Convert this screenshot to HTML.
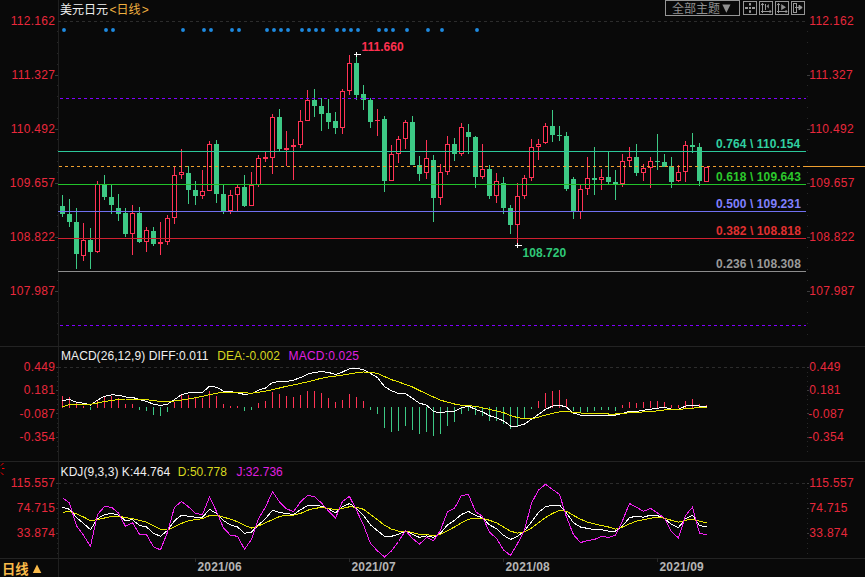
<!DOCTYPE html>
<html lang="zh"><head><meta charset="utf-8"><title>美元日元 日线</title>
<style>html,body{margin:0;padding:0;background:#090909;overflow:hidden}svg{display:block}text{font-family:"Liberation Sans","Noto Sans CJK SC",sans-serif;font-size:12px}.b{font-weight:bold}.c{shape-rendering:crispEdges}</style></head><body>
<svg width="865" height="577" viewBox="0 0 865 577">
<rect width="865" height="577" fill="#090909"/>
<g class="c" stroke="#1f1f1f" stroke-width="1" fill="none">
<path d="M58.5 0V577"/>
<path d="M0 346.5H865M0 461.5H865M0 558.5H865" stroke="#232323"/>
</g>
<path class="c" d="M57 31.5h1M807 31.5h1M57 42.5h1M807 42.5h1M57 53.5h1M807 53.5h1M57 64.5h1M807 64.5h1M57 85.5h1M807 85.5h1M57 96.5h1M807 96.5h1M57 107.5h1M807 107.5h1M57 118.5h1M807 118.5h1M57 139.5h1M807 139.5h1M57 150.5h1M807 150.5h1M57 161.5h1M807 161.5h1M57 172.5h1M807 172.5h1M57 193.5h1M807 193.5h1M57 204.5h1M807 204.5h1M57 215.5h1M807 215.5h1M57 226.5h1M807 226.5h1M57 247.5h1M807 247.5h1M57 258.5h1M807 258.5h1M57 269.5h1M807 269.5h1M57 280.5h1M807 280.5h1M57 301.5h1M807 301.5h1M57 312.5h1M807 312.5h1M57 323.5h1M807 323.5h1M57 334.5h1M807 334.5h1M57 372.5h1M807 372.5h1M57 376.5h1M807 376.5h1M57 381.5h1M807 381.5h1M57 386.5h1M807 386.5h1M57 395.5h1M807 395.5h1M57 399.5h1M807 399.5h1M57 404.5h1M807 404.5h1M57 409.5h1M807 409.5h1M57 418.5h1M807 418.5h1M57 423.5h1M807 423.5h1M57 427.5h1M807 427.5h1M57 432.5h1M807 432.5h1M57 441.5h1M807 441.5h1M57 446.5h1M807 446.5h1M57 451.5h1M807 451.5h1M57 488.5h1M807 488.5h1M57 493.5h1M807 493.5h1M57 498.5h1M807 498.5h1M57 503.5h1M807 503.5h1M57 513.5h1M807 513.5h1M57 518.5h1M807 518.5h1M57 523.5h1M807 523.5h1M57 528.5h1M807 528.5h1M57 538.5h1M807 538.5h1M57 543.5h1M807 543.5h1M57 548.5h1M807 548.5h1M57 553.5h1M807 553.5h1" stroke="#272727" stroke-width="1"/>
<path class="c" d="M55 75.5h3M807 75.5h3M55 129.5h3M807 129.5h3M55 183.5h3M807 183.5h3M55 237.5h3M807 237.5h3M55 291.5h3M807 291.5h3M56 367.5h2M807 367.5h2M56 390.5h2M807 390.5h2M56 413.5h2M807 413.5h2M56 437.5h2M807 437.5h2M56 483.5h2M807 483.5h2M56 508.5h2M807 508.5h2M56 533.5h2M807 533.5h2" stroke="#3c3c3c" stroke-width="1"/>
<path class="c" d="M195.5 558v4M349.5 558v4M503.5 558v4M657.5 558v4" stroke="#2a2a2a" stroke-width="1"/>
<g class="c" stroke="#2c2c2c" stroke-width="1" stroke-dasharray="3 3">
<path d="M58 21.5H805"/><path d="M58 367.5H805"/><path d="M58 483.5H805"/>
</g>
<g fill="#1e8ae0">
<circle cx="64" cy="30" r="1.95"/>
<circle cx="106" cy="30" r="1.95"/>
<circle cx="113" cy="30" r="1.95"/>
<circle cx="183" cy="30" r="1.95"/>
<circle cx="204" cy="30" r="1.95"/>
<circle cx="211" cy="30" r="1.95"/>
<circle cx="232" cy="30" r="1.95"/>
<circle cx="239" cy="30" r="1.95"/>
<circle cx="267" cy="30" r="1.95"/>
<circle cx="274" cy="30" r="1.95"/>
<circle cx="281" cy="30" r="1.95"/>
<circle cx="288" cy="30" r="1.95"/>
<circle cx="302" cy="30" r="1.95"/>
<circle cx="309" cy="30" r="1.95"/>
<circle cx="316" cy="30" r="1.95"/>
<circle cx="323" cy="30" r="1.95"/>
<circle cx="337" cy="30" r="1.95"/>
<circle cx="344" cy="30" r="1.95"/>
<circle cx="351" cy="30" r="1.95"/>
<circle cx="358" cy="30" r="1.95"/>
<circle cx="379" cy="30" r="1.95"/>
<circle cx="386" cy="30" r="1.95"/>
<circle cx="393" cy="30" r="1.95"/>
<circle cx="407" cy="30" r="1.95"/>
<circle cx="428" cy="30" r="1.95"/>
<circle cx="442" cy="30" r="1.95"/>
<circle cx="477" cy="30" r="1.95"/>
</g>
<g class="c">
<rect x="62" y="195" width="1" height="22" fill="#3dc985"/>
<rect x="60" y="206" width="5" height="8" fill="#3dc985"/>
<rect x="69" y="199" width="1" height="28" fill="#3dc985"/>
<rect x="67" y="214" width="5" height="8" fill="#3dc985"/>
<rect x="76" y="208" width="1" height="61" fill="#3dc985"/>
<rect x="74" y="222" width="5" height="32" fill="#3dc985"/>
<rect x="83" y="223" width="1" height="38" fill="#ff3355"/>
<rect x="81" y="240" width="5" height="16" fill="#ff3355"/>
<rect x="82" y="241" width="3" height="14" fill="#000"/>
<rect x="90" y="228" width="1" height="41" fill="#3dc985"/>
<rect x="88" y="240" width="5" height="12" fill="#3dc985"/>
<rect x="97" y="181" width="1" height="72" fill="#ff3355"/>
<rect x="95" y="184" width="5" height="68" fill="#ff3355"/>
<rect x="96" y="185" width="3" height="66" fill="#000"/>
<rect x="104" y="175" width="1" height="25" fill="#3dc985"/>
<rect x="102" y="184" width="5" height="13" fill="#3dc985"/>
<rect x="111" y="184" width="1" height="30" fill="#3dc985"/>
<rect x="109" y="197" width="5" height="8" fill="#3dc985"/>
<rect x="118" y="194" width="1" height="27" fill="#3dc985"/>
<rect x="116" y="208" width="5" height="6" fill="#3dc985"/>
<rect x="125" y="208" width="1" height="29" fill="#3dc985"/>
<rect x="123" y="213" width="5" height="21" fill="#3dc985"/>
<rect x="132" y="205" width="1" height="50" fill="#ff3355"/>
<rect x="130" y="213" width="5" height="21" fill="#ff3355"/>
<rect x="131" y="214" width="3" height="19" fill="#000"/>
<rect x="139" y="207" width="1" height="36" fill="#3dc985"/>
<rect x="137" y="213" width="5" height="29" fill="#3dc985"/>
<rect x="146" y="227" width="1" height="25" fill="#ff3355"/>
<rect x="144" y="230" width="5" height="12" fill="#ff3355"/>
<rect x="145" y="231" width="3" height="10" fill="#000"/>
<rect x="153" y="227" width="1" height="19" fill="#3dc985"/>
<rect x="151" y="231" width="5" height="13" fill="#3dc985"/>
<rect x="160" y="222" width="1" height="33" fill="#ff3355"/>
<rect x="158" y="242" width="5" height="2" fill="#ff3355"/>
<rect x="167" y="215" width="1" height="30" fill="#ff3355"/>
<rect x="165" y="218" width="5" height="24" fill="#ff3355"/>
<rect x="166" y="219" width="3" height="22" fill="#000"/>
<rect x="174" y="167" width="1" height="57" fill="#ff3355"/>
<rect x="172" y="175" width="5" height="43" fill="#ff3355"/>
<rect x="173" y="176" width="3" height="41" fill="#000"/>
<rect x="181" y="149" width="1" height="30" fill="#ff3355"/>
<rect x="179" y="172" width="5" height="3" fill="#ff3355"/>
<rect x="180" y="173" width="3" height="1" fill="#000"/>
<rect x="188" y="166" width="1" height="38" fill="#3dc985"/>
<rect x="186" y="173" width="5" height="17" fill="#3dc985"/>
<rect x="195" y="181" width="1" height="24" fill="#3dc985"/>
<rect x="193" y="190" width="5" height="6" fill="#3dc985"/>
<rect x="202" y="170" width="1" height="29" fill="#ff3355"/>
<rect x="200" y="191" width="5" height="5" fill="#ff3355"/>
<rect x="201" y="192" width="3" height="3" fill="#000"/>
<rect x="209" y="141" width="1" height="50" fill="#ff3355"/>
<rect x="207" y="144" width="5" height="47" fill="#ff3355"/>
<rect x="208" y="145" width="3" height="45" fill="#000"/>
<rect x="216" y="140" width="1" height="63" fill="#3dc985"/>
<rect x="214" y="144" width="5" height="50" fill="#3dc985"/>
<rect x="223" y="185" width="1" height="29" fill="#3dc985"/>
<rect x="221" y="194" width="5" height="18" fill="#3dc985"/>
<rect x="230" y="190" width="1" height="24" fill="#ff3355"/>
<rect x="228" y="195" width="5" height="16" fill="#ff3355"/>
<rect x="229" y="196" width="3" height="14" fill="#000"/>
<rect x="237" y="185" width="1" height="26" fill="#ff3355"/>
<rect x="235" y="187" width="5" height="8" fill="#ff3355"/>
<rect x="236" y="188" width="3" height="6" fill="#000"/>
<rect x="244" y="175" width="1" height="32" fill="#3dc985"/>
<rect x="242" y="187" width="5" height="19" fill="#3dc985"/>
<rect x="251" y="172" width="1" height="34" fill="#ff3355"/>
<rect x="249" y="185" width="5" height="21" fill="#ff3355"/>
<rect x="250" y="186" width="3" height="19" fill="#000"/>
<rect x="258" y="155" width="1" height="32" fill="#ff3355"/>
<rect x="256" y="158" width="5" height="27" fill="#ff3355"/>
<rect x="257" y="159" width="3" height="25" fill="#000"/>
<rect x="265" y="152" width="1" height="10" fill="#ff3355"/>
<rect x="263" y="157" width="5" height="2" fill="#ff3355"/>
<rect x="272" y="114" width="1" height="60" fill="#ff3355"/>
<rect x="270" y="117" width="5" height="41" fill="#ff3355"/>
<rect x="271" y="118" width="3" height="39" fill="#000"/>
<rect x="279" y="109" width="1" height="42" fill="#3dc985"/>
<rect x="277" y="117" width="5" height="32" fill="#3dc985"/>
<rect x="286" y="131" width="1" height="35" fill="#ff3355"/>
<rect x="284" y="148" width="5" height="2" fill="#ff3355"/>
<rect x="293" y="139" width="1" height="41" fill="#ff3355"/>
<rect x="291" y="145" width="5" height="2" fill="#ff3355"/>
<rect x="300" y="110" width="1" height="38" fill="#ff3355"/>
<rect x="298" y="121" width="5" height="24" fill="#ff3355"/>
<rect x="299" y="122" width="3" height="22" fill="#000"/>
<rect x="307" y="90" width="1" height="31" fill="#ff3355"/>
<rect x="305" y="100" width="5" height="21" fill="#ff3355"/>
<rect x="306" y="101" width="3" height="19" fill="#000"/>
<rect x="314" y="89" width="1" height="28" fill="#3dc985"/>
<rect x="312" y="100" width="5" height="6" fill="#3dc985"/>
<rect x="321" y="98" width="1" height="33" fill="#3dc985"/>
<rect x="319" y="106" width="5" height="8" fill="#3dc985"/>
<rect x="328" y="99" width="1" height="30" fill="#3dc985"/>
<rect x="326" y="113" width="5" height="9" fill="#3dc985"/>
<rect x="335" y="112" width="1" height="22" fill="#3dc985"/>
<rect x="333" y="121" width="5" height="7" fill="#3dc985"/>
<rect x="342" y="89" width="1" height="45" fill="#ff3355"/>
<rect x="340" y="91" width="5" height="37" fill="#ff3355"/>
<rect x="341" y="92" width="3" height="35" fill="#000"/>
<rect x="349" y="55" width="1" height="40" fill="#ff3355"/>
<rect x="347" y="63" width="5" height="28" fill="#ff3355"/>
<rect x="348" y="64" width="3" height="26" fill="#000"/>
<rect x="356" y="54" width="1" height="46" fill="#3dc985"/>
<rect x="354" y="63" width="5" height="32" fill="#3dc985"/>
<rect x="363" y="85" width="1" height="25" fill="#3dc985"/>
<rect x="361" y="94" width="5" height="6" fill="#3dc985"/>
<rect x="370" y="98" width="1" height="30" fill="#3dc985"/>
<rect x="368" y="100" width="5" height="22" fill="#3dc985"/>
<rect x="377" y="109" width="1" height="27" fill="#ff3355"/>
<rect x="375" y="120" width="5" height="1" fill="#ff3355"/>
<rect x="384" y="116" width="1" height="76" fill="#3dc985"/>
<rect x="382" y="119" width="5" height="62" fill="#3dc985"/>
<rect x="391" y="145" width="1" height="36" fill="#ff3355"/>
<rect x="389" y="154" width="5" height="27" fill="#ff3355"/>
<rect x="390" y="155" width="3" height="25" fill="#000"/>
<rect x="398" y="136" width="1" height="27" fill="#ff3355"/>
<rect x="396" y="139" width="5" height="15" fill="#ff3355"/>
<rect x="397" y="140" width="3" height="13" fill="#000"/>
<rect x="405" y="120" width="1" height="29" fill="#ff3355"/>
<rect x="403" y="122" width="5" height="17" fill="#ff3355"/>
<rect x="404" y="123" width="3" height="15" fill="#000"/>
<rect x="412" y="116" width="1" height="49" fill="#3dc985"/>
<rect x="410" y="122" width="5" height="43" fill="#3dc985"/>
<rect x="419" y="156" width="1" height="25" fill="#3dc985"/>
<rect x="417" y="165" width="5" height="9" fill="#3dc985"/>
<rect x="426" y="140" width="1" height="39" fill="#ff3355"/>
<rect x="424" y="158" width="5" height="15" fill="#ff3355"/>
<rect x="425" y="159" width="3" height="13" fill="#000"/>
<rect x="433" y="155" width="1" height="67" fill="#3dc985"/>
<rect x="431" y="160" width="5" height="38" fill="#3dc985"/>
<rect x="440" y="164" width="1" height="41" fill="#ff3355"/>
<rect x="438" y="172" width="5" height="26" fill="#ff3355"/>
<rect x="439" y="173" width="3" height="24" fill="#000"/>
<rect x="447" y="136" width="1" height="39" fill="#ff3355"/>
<rect x="445" y="144" width="5" height="28" fill="#ff3355"/>
<rect x="446" y="145" width="3" height="26" fill="#000"/>
<rect x="454" y="138" width="1" height="23" fill="#3dc985"/>
<rect x="452" y="144" width="5" height="10" fill="#3dc985"/>
<rect x="461" y="123" width="1" height="33" fill="#ff3355"/>
<rect x="459" y="127" width="5" height="27" fill="#ff3355"/>
<rect x="460" y="128" width="3" height="25" fill="#000"/>
<rect x="468" y="124" width="1" height="30" fill="#3dc985"/>
<rect x="466" y="132" width="5" height="5" fill="#3dc985"/>
<rect x="475" y="136" width="1" height="52" fill="#3dc985"/>
<rect x="473" y="137" width="5" height="40" fill="#3dc985"/>
<rect x="482" y="144" width="1" height="35" fill="#ff3355"/>
<rect x="480" y="169" width="5" height="8" fill="#ff3355"/>
<rect x="481" y="170" width="3" height="6" fill="#000"/>
<rect x="489" y="165" width="1" height="34" fill="#3dc985"/>
<rect x="487" y="169" width="5" height="27" fill="#3dc985"/>
<rect x="496" y="173" width="1" height="30" fill="#ff3355"/>
<rect x="494" y="181" width="5" height="15" fill="#ff3355"/>
<rect x="495" y="182" width="3" height="13" fill="#000"/>
<rect x="503" y="177" width="1" height="37" fill="#3dc985"/>
<rect x="501" y="183" width="5" height="25" fill="#3dc985"/>
<rect x="510" y="205" width="1" height="29" fill="#3dc985"/>
<rect x="508" y="208" width="5" height="17" fill="#3dc985"/>
<rect x="517" y="183" width="1" height="62" fill="#ff3355"/>
<rect x="515" y="196" width="5" height="29" fill="#ff3355"/>
<rect x="516" y="197" width="3" height="27" fill="#000"/>
<rect x="524" y="175" width="1" height="24" fill="#ff3355"/>
<rect x="522" y="178" width="5" height="18" fill="#ff3355"/>
<rect x="523" y="179" width="3" height="16" fill="#000"/>
<rect x="531" y="139" width="1" height="42" fill="#ff3355"/>
<rect x="529" y="147" width="5" height="31" fill="#ff3355"/>
<rect x="530" y="148" width="3" height="29" fill="#000"/>
<rect x="538" y="139" width="1" height="21" fill="#ff3355"/>
<rect x="536" y="144" width="5" height="3" fill="#ff3355"/>
<rect x="537" y="145" width="3" height="1" fill="#000"/>
<rect x="545" y="123" width="1" height="21" fill="#ff3355"/>
<rect x="543" y="126" width="5" height="17" fill="#ff3355"/>
<rect x="544" y="127" width="3" height="15" fill="#000"/>
<rect x="552" y="110" width="1" height="32" fill="#3dc985"/>
<rect x="550" y="126" width="5" height="9" fill="#3dc985"/>
<rect x="559" y="126" width="1" height="15" fill="#3dc985"/>
<rect x="557" y="135" width="5" height="1" fill="#3dc985"/>
<rect x="566" y="132" width="1" height="59" fill="#3dc985"/>
<rect x="564" y="136" width="5" height="53" fill="#3dc985"/>
<rect x="573" y="177" width="1" height="42" fill="#3dc985"/>
<rect x="571" y="179" width="5" height="33" fill="#3dc985"/>
<rect x="580" y="185" width="1" height="34" fill="#ff3355"/>
<rect x="578" y="189" width="5" height="23" fill="#ff3355"/>
<rect x="579" y="190" width="3" height="21" fill="#000"/>
<rect x="587" y="157" width="1" height="38" fill="#ff3355"/>
<rect x="585" y="178" width="5" height="11" fill="#ff3355"/>
<rect x="586" y="179" width="3" height="9" fill="#000"/>
<rect x="594" y="147" width="1" height="48" fill="#3dc985"/>
<rect x="592" y="178" width="5" height="2" fill="#3dc985"/>
<rect x="601" y="169" width="1" height="21" fill="#ff3355"/>
<rect x="599" y="177" width="5" height="3" fill="#ff3355"/>
<rect x="600" y="178" width="3" height="1" fill="#000"/>
<rect x="608" y="151" width="1" height="33" fill="#3dc985"/>
<rect x="606" y="177" width="5" height="5" fill="#3dc985"/>
<rect x="615" y="170" width="1" height="30" fill="#3dc985"/>
<rect x="613" y="182" width="5" height="2" fill="#3dc985"/>
<rect x="622" y="154" width="1" height="33" fill="#ff3355"/>
<rect x="620" y="161" width="5" height="23" fill="#ff3355"/>
<rect x="621" y="162" width="3" height="21" fill="#000"/>
<rect x="629" y="147" width="1" height="19" fill="#ff3355"/>
<rect x="627" y="157" width="5" height="4" fill="#ff3355"/>
<rect x="628" y="158" width="3" height="2" fill="#000"/>
<rect x="636" y="144" width="1" height="32" fill="#3dc985"/>
<rect x="634" y="157" width="5" height="16" fill="#3dc985"/>
<rect x="643" y="164" width="1" height="17" fill="#ff3355"/>
<rect x="641" y="168" width="5" height="5" fill="#ff3355"/>
<rect x="642" y="169" width="3" height="3" fill="#000"/>
<rect x="650" y="157" width="1" height="31" fill="#ff3355"/>
<rect x="648" y="161" width="5" height="7" fill="#ff3355"/>
<rect x="649" y="162" width="3" height="5" fill="#000"/>
<rect x="657" y="134" width="1" height="36" fill="#3dc985"/>
<rect x="655" y="161" width="5" height="1" fill="#3dc985"/>
<rect x="664" y="154" width="1" height="13" fill="#3dc985"/>
<rect x="662" y="162" width="5" height="5" fill="#3dc985"/>
<rect x="671" y="157" width="1" height="31" fill="#3dc985"/>
<rect x="669" y="166" width="5" height="16" fill="#3dc985"/>
<rect x="678" y="165" width="1" height="17" fill="#ff3355"/>
<rect x="676" y="172" width="5" height="9" fill="#ff3355"/>
<rect x="677" y="173" width="3" height="7" fill="#000"/>
<rect x="685" y="141" width="1" height="41" fill="#ff3355"/>
<rect x="683" y="145" width="5" height="27" fill="#ff3355"/>
<rect x="684" y="146" width="3" height="25" fill="#000"/>
<rect x="692" y="133" width="1" height="20" fill="#3dc985"/>
<rect x="690" y="145" width="5" height="2" fill="#3dc985"/>
<rect x="699" y="143" width="1" height="43" fill="#3dc985"/>
<rect x="697" y="147" width="5" height="34" fill="#3dc985"/>
<rect x="706" y="167" width="1" height="15" fill="#ff3355"/>
<rect x="704" y="167" width="5" height="15" fill="#ff3355"/>
<rect x="705" y="168" width="3" height="13" fill="#000"/>
</g>
<g class="c" stroke="#8000ff" stroke-width="1" stroke-dasharray="3 3"><path d="M60 98.5H806"/><path d="M60 325.5H806"/></g>
<g class="c" stroke-width="1">
<path d="M58 151.5H806" stroke="#2cc89a"/>
<path d="M59 166.5H806" stroke="#f0a030" stroke-dasharray="3 3"/>
<path d="M803 166.5H865" stroke="#f0a030"/>
<path d="M58 184.5H806" stroke="#22c32a"/>
<path d="M58 211.5H806" stroke="#7070f0"/>
<path d="M58 238.5H806" stroke="#d02030"/>
<path d="M58 271.5H806" stroke="#8c8c8c"/>
</g>
<path class="c" d="M354 54.5h7M356.5 52v5M515 245.5h7M517.5 243v5" stroke="#fff" stroke-width="1" fill="none"/>
<g class="c">
<rect x="62" y="396" width="1" height="12" fill="#ff3355"/>
<rect x="69" y="397" width="1" height="11" fill="#ff3355"/>
<rect x="76" y="403" width="1" height="5" fill="#ff3355"/>
<rect x="83" y="406" width="1" height="2" fill="#ff3355"/>
<rect x="90" y="407" width="1" height="3" fill="#3dc985"/>
<rect x="97" y="400" width="1" height="8" fill="#ff3355"/>
<rect x="104" y="396" width="1" height="12" fill="#ff3355"/>
<rect x="111" y="396" width="1" height="12" fill="#ff3355"/>
<rect x="118" y="398" width="1" height="10" fill="#ff3355"/>
<rect x="125" y="404" width="1" height="4" fill="#ff3355"/>
<rect x="132" y="404" width="1" height="4" fill="#ff3355"/>
<rect x="139" y="407" width="1" height="3" fill="#3dc985"/>
<rect x="146" y="407" width="1" height="4" fill="#3dc985"/>
<rect x="153" y="407" width="1" height="8" fill="#3dc985"/>
<rect x="160" y="407" width="1" height="9" fill="#3dc985"/>
<rect x="167" y="407" width="1" height="5" fill="#3dc985"/>
<rect x="174" y="402" width="1" height="6" fill="#ff3355"/>
<rect x="181" y="394" width="1" height="14" fill="#ff3355"/>
<rect x="188" y="395" width="1" height="13" fill="#ff3355"/>
<rect x="195" y="397" width="1" height="11" fill="#ff3355"/>
<rect x="202" y="398" width="1" height="10" fill="#ff3355"/>
<rect x="209" y="391" width="1" height="17" fill="#ff3355"/>
<rect x="216" y="396" width="1" height="12" fill="#ff3355"/>
<rect x="223" y="404" width="1" height="4" fill="#ff3355"/>
<rect x="230" y="406" width="1" height="2" fill="#ff3355"/>
<rect x="237" y="406" width="1" height="2" fill="#ff3355"/>
<rect x="244" y="407" width="1" height="4" fill="#3dc985"/>
<rect x="251" y="407" width="1" height="3" fill="#3dc985"/>
<rect x="258" y="403" width="1" height="5" fill="#ff3355"/>
<rect x="265" y="401" width="1" height="7" fill="#ff3355"/>
<rect x="272" y="392" width="1" height="16" fill="#ff3355"/>
<rect x="279" y="394" width="1" height="14" fill="#ff3355"/>
<rect x="286" y="396" width="1" height="12" fill="#ff3355"/>
<rect x="293" y="397" width="1" height="11" fill="#ff3355"/>
<rect x="300" y="395" width="1" height="13" fill="#ff3355"/>
<rect x="307" y="391" width="1" height="17" fill="#ff3355"/>
<rect x="314" y="391" width="1" height="17" fill="#ff3355"/>
<rect x="321" y="393" width="1" height="15" fill="#ff3355"/>
<rect x="328" y="398" width="1" height="10" fill="#ff3355"/>
<rect x="335" y="402" width="1" height="6" fill="#ff3355"/>
<rect x="342" y="400" width="1" height="8" fill="#ff3355"/>
<rect x="349" y="394" width="1" height="14" fill="#ff3355"/>
<rect x="356" y="397" width="1" height="11" fill="#ff3355"/>
<rect x="363" y="401" width="1" height="7" fill="#ff3355"/>
<rect x="370" y="407" width="1" height="3" fill="#3dc985"/>
<rect x="377" y="407" width="1" height="7" fill="#3dc985"/>
<rect x="384" y="407" width="1" height="21" fill="#3dc985"/>
<rect x="391" y="407" width="1" height="25" fill="#3dc985"/>
<rect x="398" y="407" width="1" height="24" fill="#3dc985"/>
<rect x="405" y="407" width="1" height="19" fill="#3dc985"/>
<rect x="412" y="407" width="1" height="23" fill="#3dc985"/>
<rect x="419" y="407" width="1" height="27" fill="#3dc985"/>
<rect x="426" y="407" width="1" height="25" fill="#3dc985"/>
<rect x="433" y="407" width="1" height="29" fill="#3dc985"/>
<rect x="440" y="407" width="1" height="27" fill="#3dc985"/>
<rect x="447" y="407" width="1" height="19" fill="#3dc985"/>
<rect x="454" y="407" width="1" height="15" fill="#3dc985"/>
<rect x="461" y="407" width="1" height="7" fill="#3dc985"/>
<rect x="468" y="407" width="1" height="4" fill="#3dc985"/>
<rect x="475" y="407" width="1" height="8" fill="#3dc985"/>
<rect x="482" y="407" width="1" height="9" fill="#3dc985"/>
<rect x="489" y="407" width="1" height="14" fill="#3dc985"/>
<rect x="496" y="407" width="1" height="14" fill="#3dc985"/>
<rect x="503" y="407" width="1" height="17" fill="#3dc985"/>
<rect x="510" y="407" width="1" height="22" fill="#3dc985"/>
<rect x="517" y="407" width="1" height="19" fill="#3dc985"/>
<rect x="524" y="407" width="1" height="12" fill="#3dc985"/>
<rect x="531" y="407" width="1" height="2" fill="#3dc985"/>
<rect x="538" y="401" width="1" height="7" fill="#ff3355"/>
<rect x="545" y="393" width="1" height="15" fill="#ff3355"/>
<rect x="552" y="391" width="1" height="17" fill="#ff3355"/>
<rect x="559" y="390" width="1" height="18" fill="#ff3355"/>
<rect x="566" y="399" width="1" height="9" fill="#ff3355"/>
<rect x="573" y="407" width="1" height="4" fill="#3dc985"/>
<rect x="580" y="407" width="1" height="6" fill="#3dc985"/>
<rect x="587" y="407" width="1" height="5" fill="#3dc985"/>
<rect x="594" y="407" width="1" height="4" fill="#3dc985"/>
<rect x="601" y="407" width="1" height="3" fill="#3dc985"/>
<rect x="608" y="407" width="1" height="3" fill="#3dc985"/>
<rect x="615" y="407" width="1" height="4" fill="#3dc985"/>
<rect x="622" y="405" width="1" height="3" fill="#ff3355"/>
<rect x="629" y="402" width="1" height="6" fill="#ff3355"/>
<rect x="636" y="403" width="1" height="5" fill="#ff3355"/>
<rect x="643" y="402" width="1" height="6" fill="#ff3355"/>
<rect x="650" y="401" width="1" height="7" fill="#ff3355"/>
<rect x="657" y="401" width="1" height="7" fill="#ff3355"/>
<rect x="664" y="402" width="1" height="6" fill="#ff3355"/>
<rect x="671" y="405" width="1" height="3" fill="#ff3355"/>
<rect x="678" y="405" width="1" height="3" fill="#ff3355"/>
<rect x="685" y="401" width="1" height="7" fill="#ff3355"/>
<rect x="692" y="399" width="1" height="9" fill="#ff3355"/>
<rect x="699" y="404" width="1" height="4" fill="#ff3355"/>
<rect x="706" y="405" width="1" height="3" fill="#ff3355"/>
</g>
<polyline points="62.5,400.5 69.5,399.5 76.5,402.2 83.5,403.2 90.5,405.1 97.5,400.1 104.5,396.3 111.5,394.9 118.5,395.1 125.5,397.0 132.5,397.4 139.5,399.5 146.5,401.5 153.5,404.2 160.5,405.5 167.5,404.2 174.5,399.5 181.5,394.7 188.5,392.8 195.5,392.6 202.5,392.4 209.5,386.3 216.5,387.2 223.5,391.1 230.5,391.5 237.5,392.8 244.5,394.5 251.5,393.6 258.5,390.1 265.5,388.0 272.5,382.4 279.5,381.6 286.5,381.4 293.5,380.1 300.5,377.6 307.5,374.1 314.5,372.4 321.5,371.6 328.5,372.4 335.5,374.5 342.5,372.0 349.5,368.7 356.5,368.2 363.5,369.9 370.5,373.4 377.5,377.6 384.5,386.6 391.5,390.7 398.5,393.6 405.5,393.6 412.5,398.4 419.5,403.2 426.5,405.1 433.5,411.3 440.5,413.0 447.5,411.5 454.5,411.3 461.5,407.8 468.5,406.1 475.5,409.4 482.5,411.9 489.5,415.7 496.5,417.8 503.5,420.9 510.5,426.1 517.5,426.1 524.5,424.0 531.5,419.2 538.5,414.4 545.5,409.4 552.5,406.1 559.5,405.1 566.5,407.2 573.5,413.0 580.5,415.1 587.5,415.1 594.5,415.1 601.5,415.1 608.5,415.1 615.5,415.1 622.5,413.4 629.5,411.3 636.5,411.3 643.5,410.3 650.5,409.2 657.5,408.2 664.5,407.2 671.5,409.2 678.5,409.2 685.5,406.1 692.5,405.1 699.5,406.1 706.5,406.1" fill="none" stroke="#ffffff" stroke-width="1" class="c"/>
<polyline points="62.5,406.7 69.5,404.7 76.5,404.2 83.5,404.2 90.5,404.2 97.5,403.0 104.5,401.5 111.5,400.5 118.5,399.5 125.5,399.0 132.5,399.0 139.5,399.5 146.5,399.7 153.5,400.5 160.5,401.5 167.5,402.0 174.5,400.9 181.5,400.1 188.5,399.0 195.5,397.8 202.5,396.3 209.5,394.7 216.5,393.2 223.5,392.4 230.5,392.6 237.5,392.6 244.5,392.8 251.5,393.2 258.5,392.2 265.5,391.1 272.5,389.7 279.5,388.0 286.5,386.3 293.5,384.9 300.5,383.4 307.5,381.8 314.5,380.1 321.5,378.2 328.5,377.0 335.5,376.1 342.5,375.1 349.5,373.9 356.5,372.8 363.5,372.0 370.5,372.4 377.5,373.4 384.5,376.6 391.5,379.7 398.5,381.8 405.5,384.5 412.5,387.0 419.5,390.5 426.5,393.8 433.5,397.0 440.5,400.1 447.5,402.2 454.5,404.0 461.5,405.3 468.5,405.7 475.5,406.3 482.5,407.8 489.5,409.4 496.5,410.9 503.5,412.6 510.5,415.5 517.5,417.6 524.5,418.8 531.5,418.8 538.5,417.1 545.5,415.1 552.5,413.4 559.5,411.9 566.5,411.1 573.5,412.4 580.5,413.0 587.5,413.4 594.5,413.4 601.5,413.4 608.5,414.0 615.5,414.0 622.5,413.6 629.5,412.6 636.5,412.6 643.5,411.9 650.5,411.3 657.5,410.9 664.5,409.9 671.5,409.9 678.5,409.4 685.5,408.8 692.5,408.2 699.5,407.2 706.5,407.2" fill="none" stroke="#e6e600" stroke-width="1" class="c"/>
<polyline points="62.5,507.2 69.5,509.3 76.5,517.6 83.5,523.4 90.5,529.7 97.5,518.7 104.5,514.5 111.5,513.5 118.5,515.1 125.5,520.7 132.5,519.7 139.5,525.5 146.5,527.0 153.5,533.2 160.5,536.3 167.5,530.5 174.5,520.7 181.5,515.1 188.5,516.2 195.5,517.2 202.5,517.2 209.5,509.3 216.5,513.5 223.5,520.7 230.5,524.9 237.5,527.0 244.5,533.2 251.5,532.2 258.5,524.9 265.5,518.7 272.5,510.3 279.5,512.4 286.5,513.5 293.5,514.5 300.5,509.7 307.5,505.8 314.5,505.1 321.5,506.2 328.5,508.9 335.5,512.8 342.5,506.8 349.5,503.5 356.5,508.3 363.5,515.5 370.5,524.9 377.5,530.7 384.5,536.3 391.5,536.3 398.5,534.3 405.5,531.1 412.5,534.3 419.5,537.4 426.5,535.9 433.5,537.4 440.5,533.2 447.5,524.9 454.5,520.3 461.5,514.5 468.5,511.4 475.5,515.5 482.5,517.6 489.5,524.9 496.5,528.6 503.5,535.3 510.5,539.5 517.5,536.3 524.5,530.7 531.5,521.8 538.5,512.4 545.5,506.8 552.5,505.1 559.5,505.1 566.5,513.0 573.5,522.8 580.5,527.0 587.5,528.4 594.5,529.5 601.5,529.7 608.5,531.1 615.5,531.1 622.5,525.9 629.5,517.6 636.5,516.2 643.5,517.2 650.5,515.1 657.5,515.5 664.5,518.7 671.5,524.3 678.5,527.6 685.5,518.7 692.5,515.1 699.5,525.5 706.5,527.0" fill="none" stroke="#ffffff" stroke-width="1" class="c"/>
<polyline points="62.5,512.4 69.5,511.4 76.5,513.9 83.5,517.0 90.5,520.7 97.5,519.7 104.5,518.0 111.5,516.6 118.5,516.2 125.5,517.6 132.5,518.7 139.5,520.3 146.5,522.2 153.5,525.9 160.5,529.1 167.5,530.1 174.5,526.6 181.5,523.4 188.5,520.7 195.5,519.7 202.5,518.7 209.5,515.5 216.5,515.1 223.5,517.2 230.5,519.1 237.5,521.8 244.5,525.3 251.5,528.0 258.5,525.9 265.5,522.8 272.5,519.7 279.5,516.6 286.5,515.1 293.5,515.1 300.5,513.5 307.5,510.3 314.5,508.3 321.5,507.6 328.5,508.3 335.5,509.7 342.5,508.3 349.5,506.8 356.5,507.2 363.5,509.3 370.5,514.5 377.5,519.7 384.5,525.3 391.5,529.1 398.5,531.1 405.5,531.1 412.5,532.6 419.5,534.3 426.5,534.7 433.5,535.7 440.5,534.3 447.5,530.7 454.5,527.0 461.5,522.8 468.5,519.3 475.5,518.2 482.5,518.2 489.5,520.3 496.5,522.8 503.5,527.0 510.5,531.1 517.5,533.2 524.5,531.8 531.5,528.0 538.5,522.8 545.5,517.6 552.5,513.5 559.5,510.3 566.5,511.2 573.5,515.5 580.5,519.1 587.5,522.2 594.5,523.9 601.5,525.5 608.5,527.0 615.5,529.1 622.5,527.0 629.5,523.9 636.5,521.2 643.5,519.7 650.5,518.2 657.5,517.2 664.5,518.2 671.5,520.3 678.5,522.2 685.5,520.3 692.5,519.1 699.5,521.2 706.5,522.8" fill="none" stroke="#e6e600" stroke-width="1" class="c"/>
<polyline points="62.5,497.8 69.5,503.0 76.5,525.9 83.5,535.3 90.5,546.3 97.5,514.5 104.5,506.6 111.5,507.2 118.5,513.0 125.5,526.4 132.5,522.8 139.5,534.3 146.5,534.7 153.5,546.7 160.5,549.9 167.5,532.2 174.5,507.2 181.5,501.4 188.5,506.8 195.5,513.5 202.5,514.5 209.5,497.2 216.5,511.4 223.5,528.0 230.5,535.3 237.5,536.3 244.5,549.2 251.5,539.5 258.5,518.7 265.5,507.2 272.5,491.6 279.5,502.0 286.5,508.9 293.5,511.4 300.5,502.0 307.5,495.4 314.5,496.8 321.5,503.0 328.5,511.0 335.5,518.2 342.5,501.4 349.5,496.4 356.5,510.3 363.5,524.9 370.5,543.6 377.5,550.9 384.5,557.0 391.5,550.9 398.5,541.5 405.5,530.5 412.5,538.4 419.5,544.2 426.5,537.4 433.5,540.9 440.5,530.1 447.5,511.8 454.5,508.3 461.5,495.4 468.5,494.7 475.5,511.4 482.5,516.6 489.5,532.2 496.5,538.4 503.5,549.9 510.5,555.5 517.5,543.6 524.5,530.1 531.5,503.0 538.5,490.1 545.5,484.3 552.5,489.5 559.5,494.3 566.5,517.0 573.5,534.7 580.5,542.6 587.5,540.5 594.5,539.5 601.5,536.3 608.5,537.4 615.5,535.3 622.5,520.7 629.5,503.5 636.5,507.2 643.5,511.4 650.5,508.3 657.5,513.0 664.5,518.2 671.5,531.8 678.5,538.0 685.5,515.5 692.5,507.2 699.5,533.2 706.5,534.7" fill="none" stroke="#f020f0" stroke-width="1" class="c"/>
<g fill="#e8283c" letter-spacing="0.3">
<text x="55.3" y="25" text-anchor="end">112.162</text>
<text x="809.3" y="25">112.162</text>
<text x="55.3" y="79" text-anchor="end">111.327</text>
<text x="809.3" y="79">111.327</text>
<text x="55.3" y="133" text-anchor="end">110.492</text>
<text x="809.3" y="133">110.492</text>
<text x="55.3" y="187" text-anchor="end">109.657</text>
<text x="809.3" y="187">109.657</text>
<text x="55.3" y="241" text-anchor="end">108.822</text>
<text x="809.3" y="241">108.822</text>
<text x="55.3" y="295" text-anchor="end">107.987</text>
<text x="809.3" y="295">107.987</text>
<text x="55.3" y="371" text-anchor="end">0.449</text>
<text x="809.3" y="371">0.449</text>
<text x="55.3" y="394" text-anchor="end">0.181</text>
<text x="809.3" y="394">0.181</text>
<text x="55.3" y="418" text-anchor="end">-0.087</text>
<text x="808.2" y="418">-0.087</text>
<text x="55.3" y="441" text-anchor="end">-0.354</text>
<text x="808.2" y="441">-0.354</text>
<text x="55.3" y="487" text-anchor="end">115.557</text>
<text x="809.3" y="487">115.557</text>
<text x="55.3" y="512" text-anchor="end">74.715</text>
<text x="809.3" y="512">74.715</text>
<text x="55.3" y="537" text-anchor="end">33.874</text>
<text x="809.3" y="537">33.874</text>
</g>
<text x="60" y="14" fill="#f0f0f0">美元日元<tspan fill="#f0b040" dx="1.5">&lt;日线<tspan dx="1.2">&gt;</tspan></tspan></text>
<g class="b" letter-spacing="0.1">
<text x="716" y="148" fill="#30d0a0">0.764 \ 110.154</text>
<text x="716" y="181" fill="#2cc82c">0.618 \ 109.643</text>
<text x="716" y="208" fill="#8080ff">0.500 \ 109.231</text>
<text x="716" y="235" fill="#e03030">0.382 \ 108.818</text>
<text x="716" y="268" fill="#9a9a9a">0.236 \ 108.308</text>
<text x="361.5" y="51.3" fill="#ff3050" letter-spacing="0">111.660</text>
<text x="522.5" y="257" fill="#30c878" letter-spacing="0.05">108.720</text>
</g>
<text x="61" y="360" fill="#f0f0f0" xml:space="preserve" letter-spacing="0.07">MACD(26,12,9) DIFF:0.011<tspan fill="#d8d820" x="217.2">DEA:-0.002</tspan><tspan fill="#e020e0" x="288.6" letter-spacing="0.18">MACD:0.025</tspan></text>
<text x="60.6" y="476" fill="#f0f0f0" xml:space="preserve" letter-spacing="0.05">KDJ(9,3,3) K:44.764<tspan fill="#d8d820" x="177.8">D:50.778</tspan><tspan fill="#e020e0" x="236.4">J:32.736</tspan></text>
<g class="b" fill="#b4b4b4" letter-spacing="0.15">
<text x="197.5" y="570.5">2021/06</text>
<text x="351.5" y="570.5">2021/07</text>
<text x="505.5" y="570.5">2021/08</text>
<text x="659.5" y="570.5">2021/09</text>
</g>
<text class="b" x="1.9" y="574" fill="#fabb4a" style="font-size:13.3px">日线</text>
<path d="M32.8 573L37 564.6L41.3 573Z" fill="#fabb4a"/>
<path d="M1 465.5L3.5 463M2 468.5H4.5M1 472.5L3.5 475" stroke="#ff0000" stroke-width="1" fill="none"/>
<g fill="none" stroke="#969696" stroke-width="1" class="c">
<rect x="665.5" y="0.5" width="74" height="15"/>
<rect x="743.5" y="1.5" width="13" height="13"/>
<rect x="759.5" y="1.5" width="13" height="13"/>
<rect x="775.5" y="1.5" width="13" height="13"/>
<rect x="791.5" y="1.5" width="13" height="13"/>
</g>
<text x="672" y="12.5" fill="#909090">全部主题</text>
<path d="M722.3 4.5h8.2L726.4 12.8Z" fill="#909090"/>
<g class="c" fill="#9a9a9a">
<rect x="745" y="7" width="3" height="2"/><rect x="749" y="7" width="2" height="2"/><rect x="752" y="7" width="3" height="2"/>
</g><g fill="#9a9a9a">
<rect x="749" y="3.1" width="2" height="2.4"/><rect x="749" y="10.3" width="2" height="2.5"/>
</g>
<g stroke="#9a9a9a" stroke-width="1" fill="none">
<path d="M762.5 3.5V13M761 11.5H771M761 5.2l1.5-1.9l1.5 1.9M769.6 10l1.4 1.5l-1.4 1.5M765.5 4V10"/>
<path d="M768.9 4L766.4 6.3L768.9 8.6Z" fill="#858585" stroke="none"/>
<path d="M778.5 3.5V13M777 11.5H787M777 5.2l1.5-1.9l1.5 1.9M785.6 10l1.4 1.5l-1.4 1.5"/>
<path d="M781.2 4L786 7.2L781.2 10.3Z" fill="#8c8c8c" stroke="none"/>
<rect class="c" x="793.5" y="3.5" width="3" height="9"/>
<path d="M795 7.5H800M799 5.1l3.2 2.4l-3.2 2.4Z" fill="#9a9a9a"/>
</g>
</svg></body></html>
